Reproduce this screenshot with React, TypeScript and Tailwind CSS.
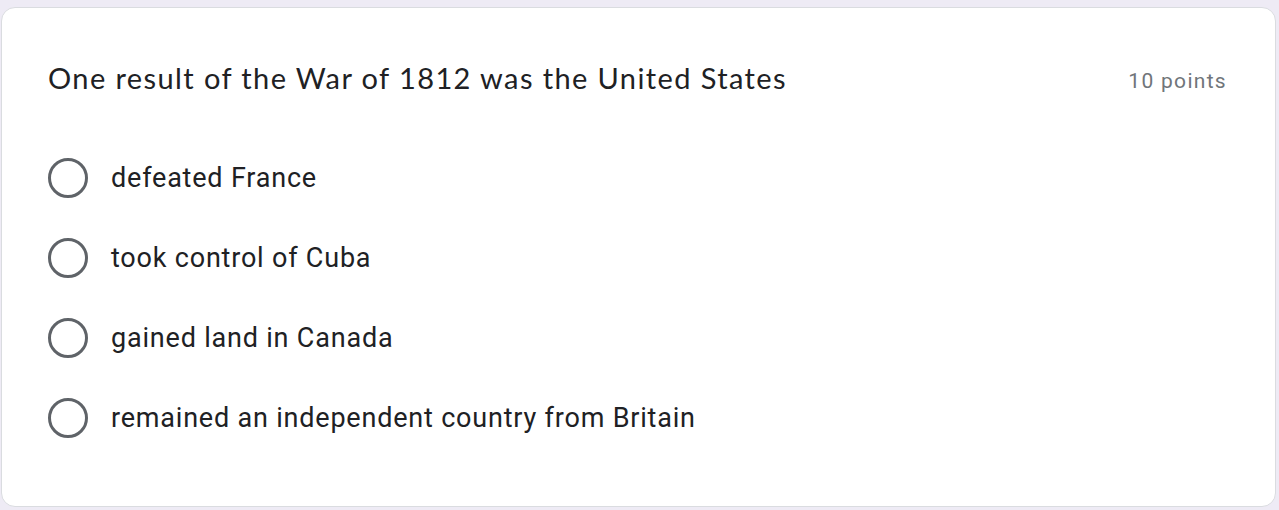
export default function App() {
  const options = [
    "defeated France",
    "took control of Cuba",
    "gained land in Canada",
    "remained an independent country from Britain",
  ];

  return (
    <div className="h-[510px] w-[1279px] overflow-hidden bg-[#eeebf5] pt-[7px] pl-[1px] pr-[3px]">
      <div className="h-[500px] rounded-[14px] border border-[#dadce0] bg-white pl-[46px] pr-[48px] pt-[48px]">
        <div className="flex items-start justify-between">
          <h2 className="font-['Lato',sans-serif] text-[29px] leading-[44px] tracking-[1.4px] text-[#202124]">
            One result of the War of 1812 was the United States
          </h2>
          <span className="mt-[10px] font-['Roboto',sans-serif] text-[21px] leading-[30px] tracking-[1.3px] text-[#70757a]">
            10 points
          </span>
        </div>
        <ul className="mt-[38px] flex flex-col">
          {options.map((o) => (
            <li key={o} className="flex h-[80px] items-center gap-[23px]">
              <span className="h-[40px] w-[40px] shrink-0 rounded-full border-[3.5px] border-[#5f6368]" />
              <span className="font-['Roboto',sans-serif] text-[27px] leading-[36px] tracking-[0.8px] text-[#202124]">
                {o}
              </span>
            </li>
          ))}
        </ul>
      </div>
    </div>
  );
}
